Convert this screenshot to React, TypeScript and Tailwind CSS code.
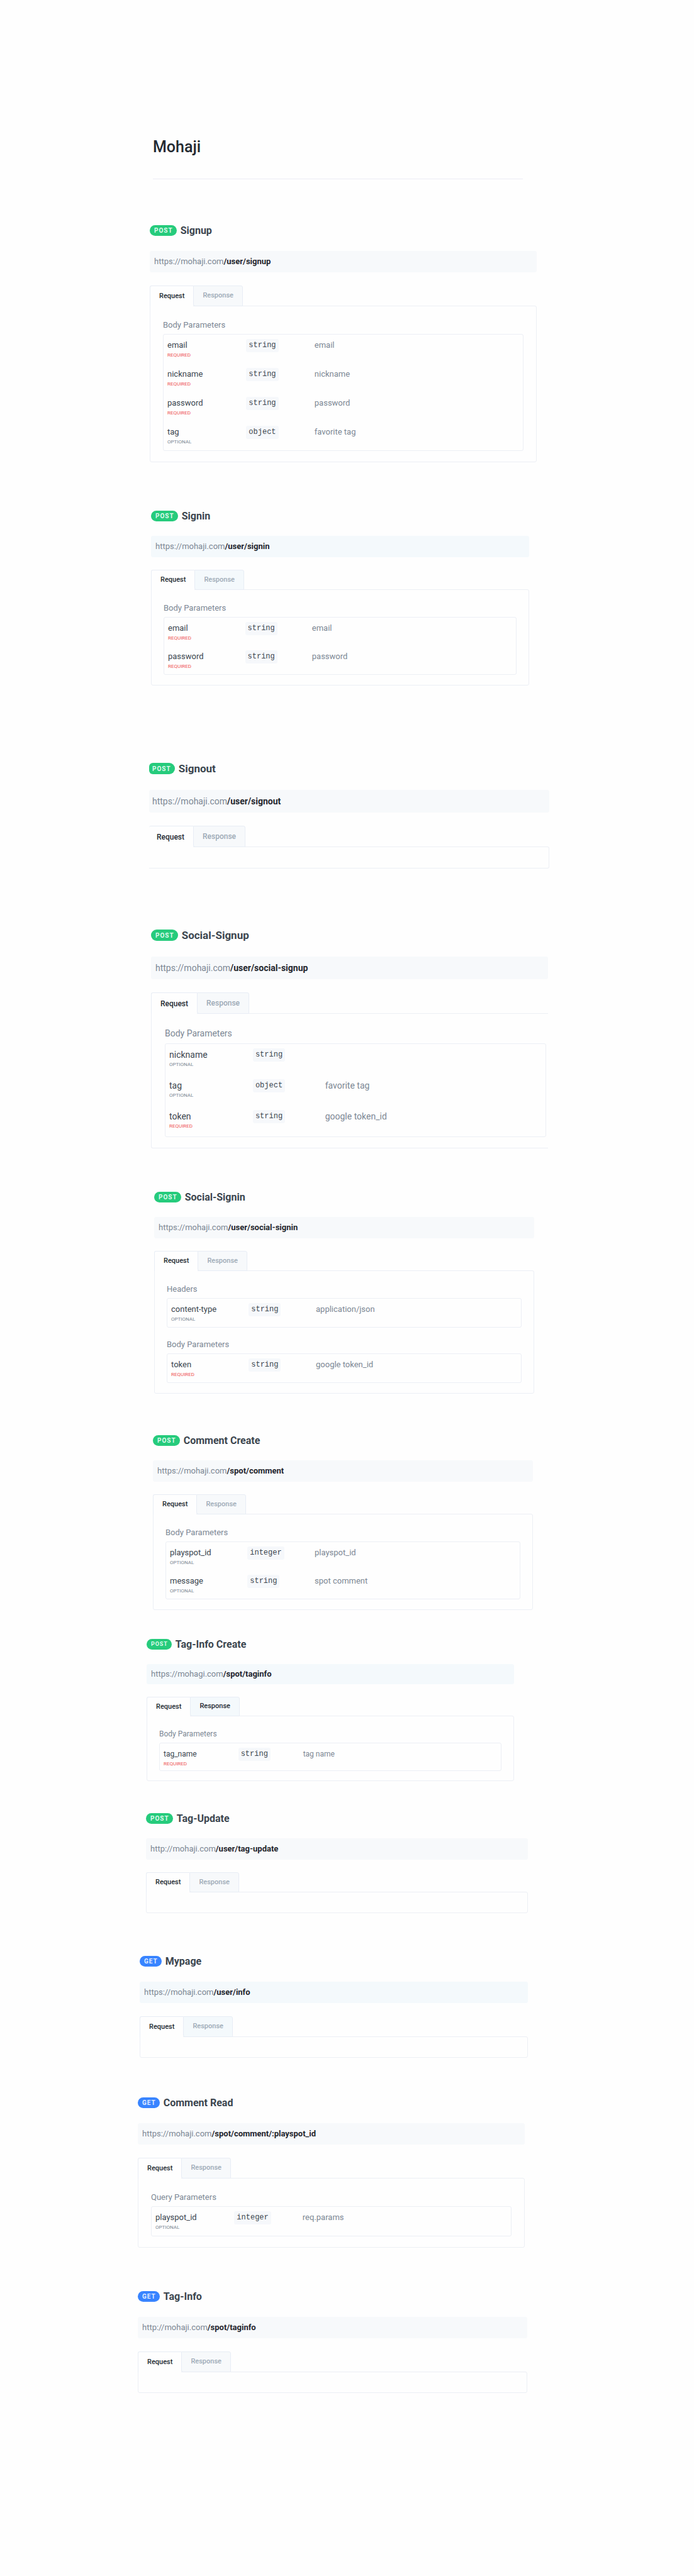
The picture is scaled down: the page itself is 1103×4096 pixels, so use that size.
import { useState } from "react";
import clsx from "clsx";

type Param = { name: string; type: string; note: string; required?: boolean };
type Group = { label: string; params: Param[] };
type Size = "xs" | "sm" | "md" | "lg";
type Endpoint = {
  method: "POST" | "GET";
  title: string;
  host: string;
  path: string;
  size: Size;
  place: string;
  groups?: Group[];
  cut?: "left" | "right";
  tint?: "blue";
  hovered?: boolean;
};

const sizes = {
  xs: {
    head: "h-[17px] text-base",
    badge: "text-[9px]",
    url: "mt-[23px] h-8 text-[13px]",
    tabs: "mt-5 h-[30px] text-[11px]",
    panel: "min-h-8",
    body: "px-[19px] pt-[18px] pb-[15px] text-xs",
    label: "mb-1",
    row: "h-[43px]",
    next: "mt-4",
  },
  sm: {
    head: "h-[17px] text-base",
    badge: "text-[10px]",
    url: "mt-[23px] h-[34px] text-[13px]",
    tabs: "mt-5 h-[31px] text-[11px]",
    panel: "min-h-[34px]",
    body: "px-[19px] pt-[19px] pb-4 text-[13px]",
    label: "mb-1",
    row: "h-[45px]",
    next: "mt-[17px]",
  },
  md: {
    head: "h-[17px] text-base",
    badge: "text-[10px]",
    url: "mt-6 h-[34px] text-[13px]",
    tabs: "mt-[21px] h-8 text-[11px]",
    panel: "min-h-[34px]",
    body: "px-5 pt-5 pb-[17px] text-[13px]",
    label: "mb-1",
    row: "h-[46px]",
    next: "mt-[17px]",
  },
  lg: {
    head: "h-[18px] text-[17px]",
    badge: "text-[10px]",
    url: "mt-[25px] h-9 text-[14px]",
    tabs: "mt-[21px] h-[33px] text-xs",
    panel: "min-h-[35px]",
    body: "px-[21px] pt-[21px] pb-[17px] text-sm",
    label: "mb-[6px]",
    row: "h-[49px]",
    next: "mt-[17px]",
  },
};

const https = "https://mohaji.com";

const endpoints: Endpoint[] = [
  {
    method: "POST", title: "Signup", host: https, path: "/user/signup", size: "md",
    place: "mt-[73px] ml-[19px] max-w-[615px]",
    groups: [{
      label: "Body Parameters",
      params: [
        { name: "email", type: "string", note: "email", required: true },
        { name: "nickname", type: "string", note: "nickname", required: true },
        { name: "password", type: "string", note: "password", required: true },
        { name: "tag", type: "object", note: "favorite tag" },
      ],
    }],
  },
  {
    method: "POST", title: "Signin", host: https, path: "/user/signin", size: "sm", tint: "blue",
    place: "mt-[77px] ml-[21px] max-w-[601px]",
    groups: [{
      label: "Body Parameters",
      params: [
        { name: "email", type: "string", note: "email", required: true },
        { name: "password", type: "string", note: "password", required: true },
      ],
    }],
  },
  {
    method: "POST", title: "Signout", host: https, path: "/user/signout", size: "lg", cut: "left",
    place: "mt-[123px] ml-[18px] max-w-[636px]",
  },
  {
    method: "POST", title: "Social-Signup", host: https, path: "/user/social-signup", size: "lg", cut: "right",
    place: "mt-[97px] ml-[21px] max-w-[631px]",
    groups: [{
      label: "Body Parameters",
      params: [
        { name: "nickname", type: "string", note: "" },
        { name: "tag", type: "object", note: "favorite tag" },
        { name: "token", type: "string", note: "google token_id", required: true },
      ],
    }],
  },
  {
    method: "POST", title: "Social-Signin", host: https, path: "/user/social-signin", size: "sm",
    place: "mt-[69px] ml-[26px] max-w-[604px]",
    groups: [
      { label: "Headers", params: [{ name: "content-type", type: "string", note: "application/json" }] },
      { label: "Body Parameters", params: [{ name: "token", type: "string", note: "google token_id", required: true }] },
    ],
  },
  {
    method: "POST", title: "Comment Create", host: https, path: "/spot/comment", size: "sm",
    place: "mt-[66px] ml-[24px] max-w-[604px]",
    groups: [{
      label: "Body Parameters",
      params: [
        { name: "playspot_id", type: "integer", note: "playspot_id" },
        { name: "message", type: "string", note: "spot comment" },
      ],
    }],
  },
  {
    method: "POST", title: "Tag-Info Create", host: "https://mohagi.com", path: "/spot/taginfo", size: "xs",
    tint: "blue", hovered: true,
    place: "mt-[46px] ml-[14px] max-w-[584px]",
    groups: [{
      label: "Body Parameters",
      params: [{ name: "tag_name", type: "string", note: "tag name", required: true }],
    }],
  },
  {
    method: "POST", title: "Tag-Update", host: "http://mohaji.com", path: "/user/tag-update", size: "sm",
    place: "mt-[51px] ml-[13px] max-w-[607px]",
  },
  {
    method: "GET", title: "Mypage", host: https, path: "/user/info", size: "md", tint: "blue",
    place: "mt-[68px] ml-[3px] max-w-[617px]",
  },
  {
    method: "GET", title: "Comment Read", host: https, path: "/spot/comment/:playspot_id", size: "md",
    place: "mt-[63px] max-w-[615px]",
    groups: [{
      label: "Query Parameters",
      params: [{ name: "playspot_id", type: "integer", note: "req.params" }],
    }],
  },
  {
    method: "GET", title: "Tag-Info", host: "http://mohaji.com", path: "/spot/taginfo", size: "md",
    place: "mt-[69px] max-w-[619px]",
  },
];

function ParamTable({ group, size }: { group: Group; size: Size }) {
  const s = sizes[size];
  return (
    <div className="rounded-[3px] border border-[#eceff5]">
      <table className="w-full table-fixed border-collapse text-left" aria-label={group.label}>
        <tbody>
          {group.params.map((p) => (
            <tr key={p.name} className={clsx("align-top", s.row)}>
              <th scope="row" className="w-[23%] p-0 pt-[7px] pl-[6px] font-normal">
                <span className="block leading-5 text-[#3b454e]">{p.name}</span>
                <span className={clsx("block text-[8px] leading-3", p.required ? "text-[#ee5253]" : "text-[#7c8794]")}>
                  {p.required ? "REQUIRED" : "OPTIONAL"}
                </span>
              </th>
              <td className="w-[19%] p-0 pt-[7px]">
                <code className="block w-fit rounded-[3px] bg-[#f6f8fb] px-1 font-['Liberation_Mono',monospace] text-xs leading-[21px] text-[#3b454e]">
                  {p.type}
                </code>
              </td>
              <td className="p-0 pt-[7px] leading-5 text-[#7c8794]">{p.note}</td>
            </tr>
          ))}
        </tbody>
      </table>
    </div>
  );
}

function EndpointCard({ endpoint: e }: { endpoint: Endpoint }) {
  const [tab, setTab] = useState("Request");
  const s = sizes[e.size];
  const tint = e.tint === "blue" ? "bg-[#f4f9fc]" : "bg-[#f7f9fb]";
  return (
    <section className={clsx("w-full", e.place)}>
      <div className={clsx("flex items-center gap-[6px]", s.head)}>
        <span
          className={clsx(
            "flex h-full items-center pr-[6px] font-bold tracking-widest",
            s.badge,
            e.cut === "left" ? "rounded-l-md rounded-r-[9px] pl-[5px]" : "rounded-[9px] pl-[7px]",
            e.method === "POST" ? "bg-[#26cb7c] text-[#dffaec]" : "bg-[#3884ff] text-[#e1edff]",
          )}
        >
          {e.method}
        </span>
        <h2 className="leading-5 font-bold text-[#3b454e]">{e.title}</h2>
      </div>

      <p
        className={clsx(
          "flex items-center rounded-[3px] text-[#7c8794]",
          s.url,
          tint,
          e.cut === "left" ? "pl-[5px]" : "pl-[7px]",
        )}
      >
        {e.host}
        <strong className="font-bold text-[#1f252c]">{e.path}</strong>
      </p>

      <div role="tablist" aria-label={e.title} className={clsx("flex font-medium", s.tabs)}>
        {["Request", "Response"].map((name, i) => (
          <button
            key={name}
            type="button"
            role="tab"
            aria-selected={tab === name}
            onClick={() => setTab(name)}
            className={clsx(
              "-mb-px border-t border-[#e8edf5] pr-[14px]",
              i === 0 && e.cut === "left" ? "pl-3" : "pl-[14px]",
              i === 0 ? "rounded-tl-[3px]" : "rounded-tr-[3px] rounded-bl-[3px] border-r border-l",
              i === 0 && e.cut !== "left" && "border-l",
              tab === name
                ? "z-10 bg-[#fefefe] text-[#242a31]"
                : clsx("border-b", tint, e.hovered ? "text-[#242a31]" : "text-[#9daab6] hover:text-[#242a31]"),
            )}
          >
            {name}
          </button>
        ))}
      </div>

      <div
        role="tabpanel"
        className={clsx(
          "border-y border-[#eceff5]",
          s.panel,
          e.cut !== "left" && "rounded-bl-[3px] border-l",
          e.cut !== "right" && "rounded-r-[3px] border-r",
        )}
      >
        {tab === "Request" && e.groups && (
          <div className={clsx(s.body, e.cut === "right" && "pr-[3px]")}>
            {e.groups.map((g, i) => (
              <div key={g.label} className={clsx(i > 0 && s.next)}>
                <h3 className={clsx("leading-5 text-[#7c8794]", s.label)}>{g.label}</h3>
                <ParamTable group={g} size={e.size} />
              </div>
            ))}
          </div>
        )}
      </div>
    </section>
  );
}

export default function App() {
  return (
    <div className="bg-[#fefefe] font-['Roboto','Liberation_Sans',sans-serif]">
      <main className="mx-auto max-w-[665px] pt-[218px] pb-[292px]">
        <header className="mr-[53px] ml-6 border-b border-[#ebecf5] pb-[35px]">
          <h1 className="text-[25px] leading-[31px] font-medium text-[#242a31]">Mohaji</h1>
        </header>
        {endpoints.map((e) => (
          <EndpointCard key={e.title} endpoint={e} />
        ))}
      </main>
    </div>
  );
}
